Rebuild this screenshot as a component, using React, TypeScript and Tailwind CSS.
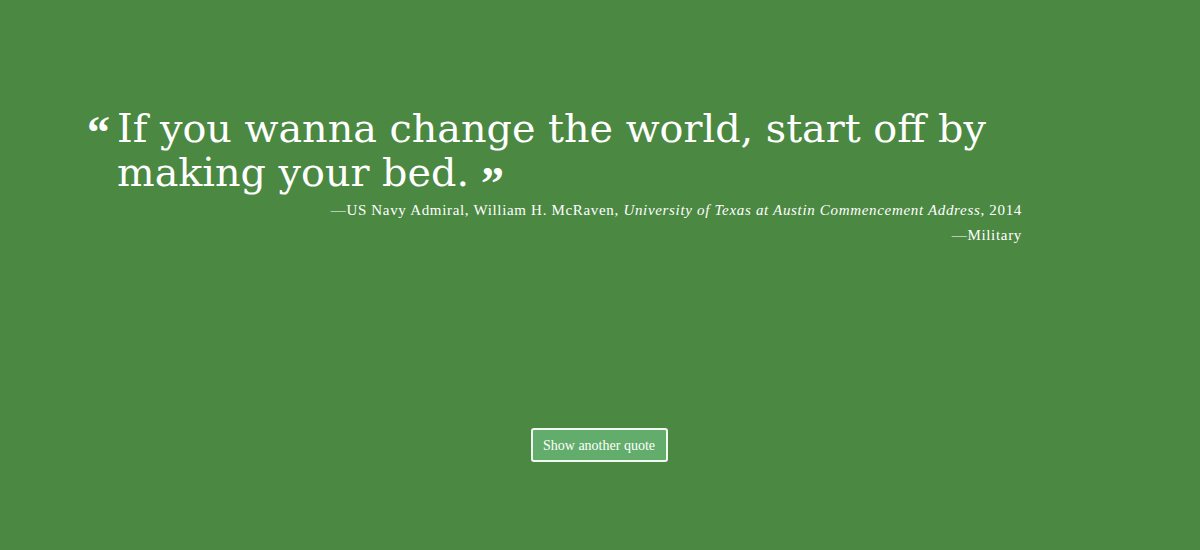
import React from 'react';

const App: React.FC = () => {
  return (
    <div className="h-[550px] w-full bg-[#4b8842] text-white overflow-hidden" style={{ fontFamily: '"Liberation Serif", "DejaVu Serif", serif' }}>
      <div className="ml-[87px] w-[935px] pt-[106px]">
        {/* Quote */}
        <div className="flex items-start">
          <span className="w-[30px] h-[30px] shrink-0 text-[46px] leading-[46px] font-bold mt-[4px]">&ldquo;</span>
          <p className="w-[900px] text-[39.7px] leading-[44px] font-['DejaVu_Serif',serif]">
            If you wanna change the world, start off by making your bed.
            <span className="inline-block ml-[12px] h-[20px] align-middle font-['Liberation_Serif',serif] text-[46px] leading-[20px] font-bold relative top-[8px]">&rdquo;</span>
          </p>
        </div>

        {/* Attribution */}
        <div className="mt-[4px] text-right text-[15px] leading-[25px] tracking-[0.045em]">
          <p>
            —US Navy Admiral, William H. McRaven, <i>University of Texas at Austin Commencement Address</i>, 2014
          </p>
          <p>—Military</p>
        </div>
      </div>

      <div className="flex justify-center mt-[180px]">
        <button className="h-[34px] w-[137px] -translate-x-[1px] rounded-[3px] border-2 border-[#f2f7f1] bg-[#62ad6b] text-[14px] text-white">
          Show another quote
        </button>
      </div>
    </div>
  );
};

export default App;
